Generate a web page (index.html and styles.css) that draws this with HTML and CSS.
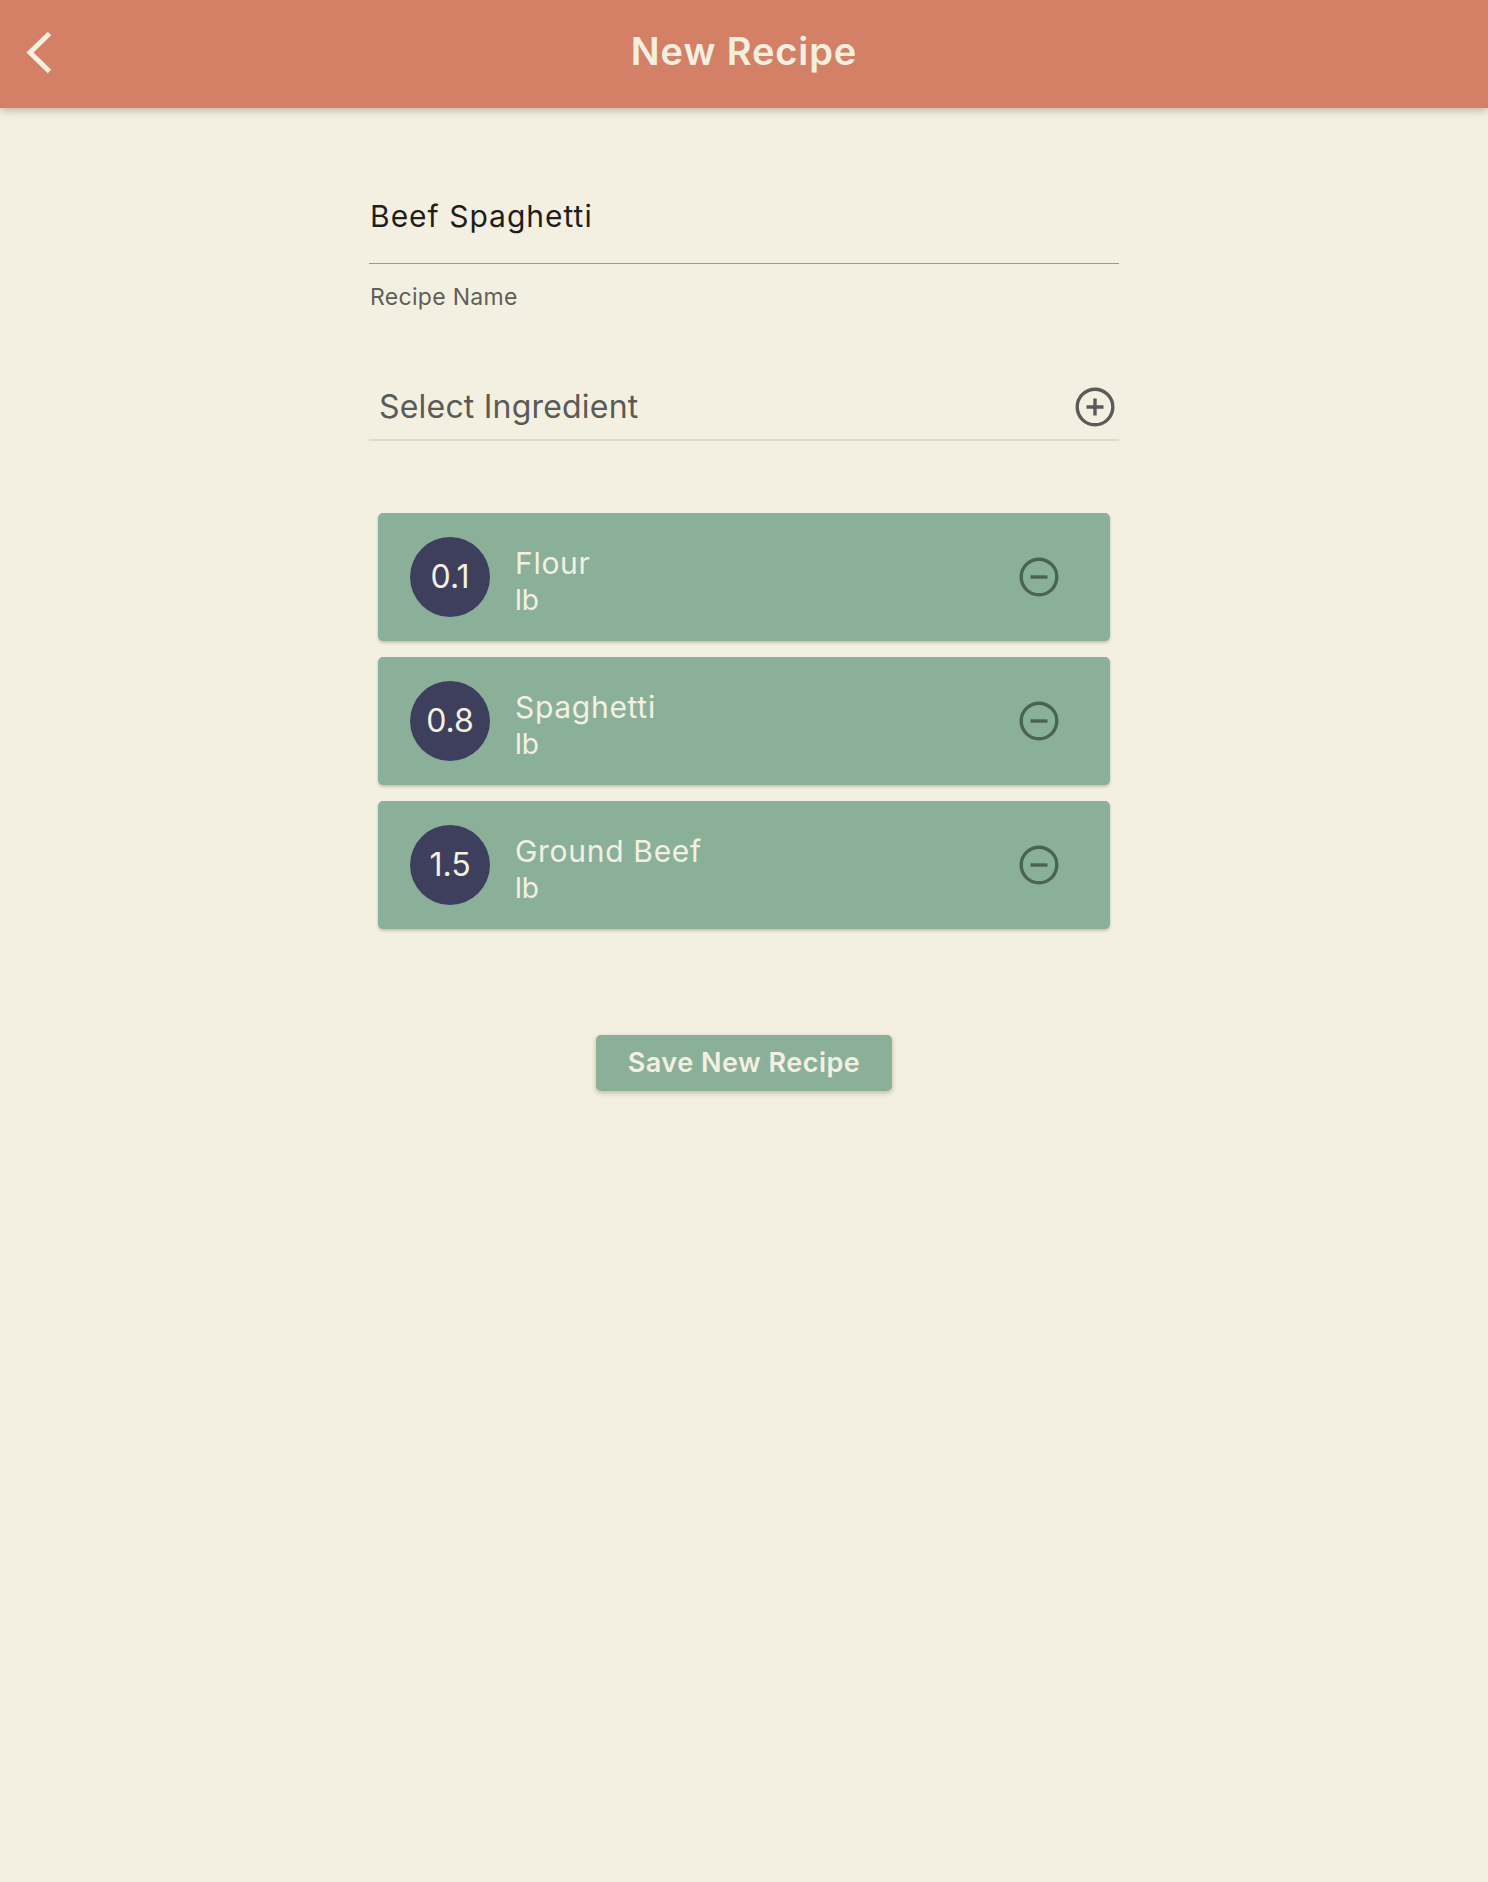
FILE: index.html
```html
<!DOCTYPE html>
<html lang="en">
<head>
<meta charset="utf-8">
<title>New Recipe</title>
<link rel="stylesheet" href="styles.css">
</head>
<body>
<header class="topbar">
  <button class="back" aria-label="Back">
    <svg width="40" height="50" viewBox="0 0 40 50"><polyline points="29.5,4.5 10,23.5 29.5,42.5" fill="none" stroke="#F4F0E1" stroke-width="5"/></svg>
  </button>
  <h1 class="title">New Recipe</h1>
  <span class="spacer"></span>
</header>

<main class="form">
  <div class="name-field">
    <div class="name-value">Beef Spaghetti</div>
  </div>
  <div class="name-label">Recipe Name</div>

  <div class="select-row">
    <span class="select-text">Select Ingredient</span>
    <svg class="plus" width="40" height="40" viewBox="0 0 40 40"><circle cx="20" cy="20" r="17.8" fill="none" stroke="#5A5A57" stroke-width="3.4"/><path d="M11.5 20H28.5M20 11.5V28.5" stroke="#5A5A57" stroke-width="3.4"/></svg>
  </div>

  <ul class="ingredients">
    <li class="card">
      <span class="qty">0.1</span>
      <div class="info"><div class="iname">Flour</div><div class="unit">lb</div></div>
      <svg class="minus" width="40" height="40" viewBox="0 0 40 40"><circle cx="20" cy="20" r="17.8" fill="none" stroke="#4A6352" stroke-width="3.4"/><path d="M11.5 20H28.5" stroke="#4A6352" stroke-width="3.4"/></svg>
    </li>
    <li class="card">
      <span class="qty">0.8</span>
      <div class="info"><div class="iname">Spaghetti</div><div class="unit">lb</div></div>
      <svg class="minus" width="40" height="40" viewBox="0 0 40 40"><circle cx="20" cy="20" r="17.8" fill="none" stroke="#4A6352" stroke-width="3.4"/><path d="M11.5 20H28.5" stroke="#4A6352" stroke-width="3.4"/></svg>
    </li>
    <li class="card">
      <span class="qty">1.5</span>
      <div class="info"><div class="iname">Ground Beef</div><div class="unit">lb</div></div>
      <svg class="minus" width="40" height="40" viewBox="0 0 40 40"><circle cx="20" cy="20" r="17.8" fill="none" stroke="#4A6352" stroke-width="3.4"/><path d="M11.5 20H28.5" stroke="#4A6352" stroke-width="3.4"/></svg>
    </li>
  </ul>

  <div class="actions">
    <button class="save">Save New Recipe</button>
  </div>
</main>
</body>
</html>
```

FILE: styles.css
```css
* { box-sizing: border-box; }

html, body {
  margin: 0;
  padding: 0;
}

body {
  background: #F4F0E1;
  font-family: Inter, "Noto Sans", sans-serif;
  min-height: 1882px;
}

.topbar {
  height: 108px;
  background: #D48066;
  display: grid;
  grid-template-columns: 1fr auto 1fr;
  align-items: center;
  box-shadow: 0 3px 8px rgba(60, 50, 30, 0.28);
  position: relative;
  z-index: 1;
}

.back {
  justify-self: start;
  margin-left: 20px;
  padding: 0;
  border: 0;
  background: none;
  display: flex;
}

.title {
  margin: 0;
  padding-bottom: 6px;
  font-size: 38px;
  font-weight: 600;
  letter-spacing: 0.9px;
  color: #F4F0E1;
  line-height: 46px;
}

.form {
  width: 750px;
  margin: 0 auto;
}

.name-field {
  margin-top: 90px;
  padding-bottom: 29px;
  border-bottom: 1.5px solid #9B988B;
}

.name-value {
  font-size: 30px;
  line-height: 36px;
  letter-spacing: 1px;
  color: #1E1E1C;
  padding-left: 1px;
}

.name-label {
  margin-top: 18.5px;
  font-size: 23px;
  line-height: 28px;
  letter-spacing: 0.3px;
  color: #5F5E59;
  padding-left: 1px;
}

.select-row {
  margin-top: 76px;
  display: flex;
  align-items: center;
  justify-content: space-between;
  padding: 0 4px 12px 10px;
  border-bottom: 2px solid #DCD9CD;
}

.select-text {
  font-size: 32px;
  line-height: 40px;
  letter-spacing: 0.2px;
  color: #5A5A57;
}

.plus { display: block; }

.ingredients {
  list-style: none;
  margin: 72px 0 0;
  padding: 0 9px;
  display: flex;
  flex-direction: column;
  gap: 16px;
}

.card {
  height: 128px;
  background: #8AB09A;
  border-radius: 5px;
  display: flex;
  align-items: center;
  padding: 0 51px 0 32px;
  box-shadow: 0 2px 3px rgba(60, 60, 40, 0.25);
}

.qty {
  width: 80px;
  height: 80px;
  border-radius: 50%;
  background: #3D3F5C;
  color: #F4F0E1;
  display: flex;
  align-items: center;
  justify-content: center;
  font-size: 32px;
  flex: none;
}

.info {
  flex: 1;
  margin-left: 25px;
  padding-top: 9px;
  color: #F4F0E1;
}

.iname {
  font-size: 30px;
  line-height: 36px;
  letter-spacing: 0.7px;
}

.unit {
  font-size: 28px;
  line-height: 34px;
  margin-top: 2px;
  font-weight: 400;
}

.minus { display: block; flex: none; }

.actions {
  display: flex;
  justify-content: center;
  margin-top: 106px;
}

.save {
  height: 56px;
  padding: 0 32px;
  border: 0;
  border-radius: 5px;
  background: #8AB09A;
  color: #F4F0E1;
  font-family: Inter, "Noto Sans", sans-serif;
  font-size: 27px;
  font-weight: 600;
  letter-spacing: 0.5px;
  box-shadow: 0 2px 5px rgba(60, 60, 40, 0.3);
}
```
